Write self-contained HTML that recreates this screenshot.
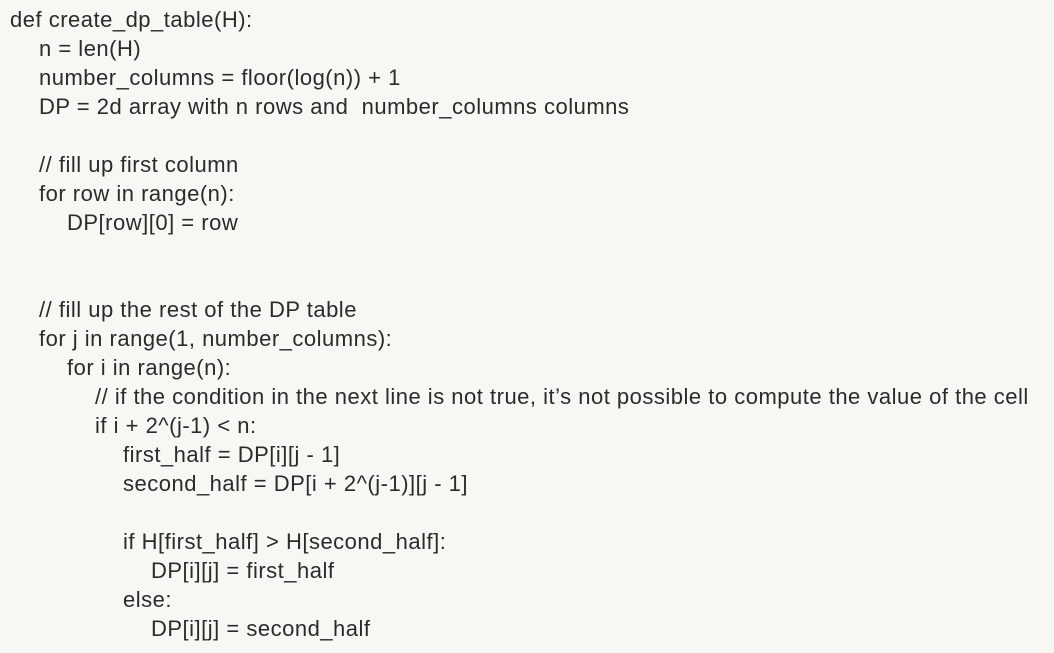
<!DOCTYPE html>
<html><head><meta charset="utf-8"><style>
html,body{margin:0;padding:0;}
body{width:1054px;height:653px;background:#f7f7f4;overflow:hidden;position:relative;font-family:"Liberation Sans",sans-serif;font-size:22px;letter-spacing:0.5px;color:#2b2b2b;}
.l{position:absolute;white-space:pre;line-height:29px;height:29px;margin-top:-1px;}
</style></head><body>
<div class="l" style="left:10px;top:6px">def create_dp_table(H):</div>
<div class="l" style="left:39px;top:35px">n = len(H)</div>
<div class="l" style="left:39px;top:64px">number_columns = floor(log(n)) + 1</div>
<div class="l" style="left:39px;top:93px">DP = 2d array with n rows and  number_columns columns</div>
<div class="l" style="left:39px;top:151px">// fill up first column</div>
<div class="l" style="left:39px;top:180px">for row in range(n):</div>
<div class="l" style="left:67px;top:209px">DP[row][0] = row</div>
<div class="l" style="left:39px;top:296px">// fill up the rest of the DP table</div>
<div class="l" style="left:39px;top:325px">for j in range(1, number_columns):</div>
<div class="l" style="left:67px;top:354px">for i in range(n):</div>
<div class="l" style="left:95px;top:383px">// if the condition in the next line is not true, it’s not possible to compute the value of the cell</div>
<div class="l" style="left:95px;top:412px">if i + 2^(j-1) &lt; n:</div>
<div class="l" style="left:123px;top:441px">first_half = DP[i][j - 1]</div>
<div class="l" style="left:123px;top:470px">second_half = DP[i + 2^(j-1)][j - 1]</div>
<div class="l" style="left:123px;top:528px">if H[first_half] &gt; H[second_half]:</div>
<div class="l" style="left:151px;top:557px">DP[i][j] = first_half</div>
<div class="l" style="left:123px;top:586px">else:</div>
<div class="l" style="left:151px;top:615px">DP[i][j] = second_half</div>
</body></html>
